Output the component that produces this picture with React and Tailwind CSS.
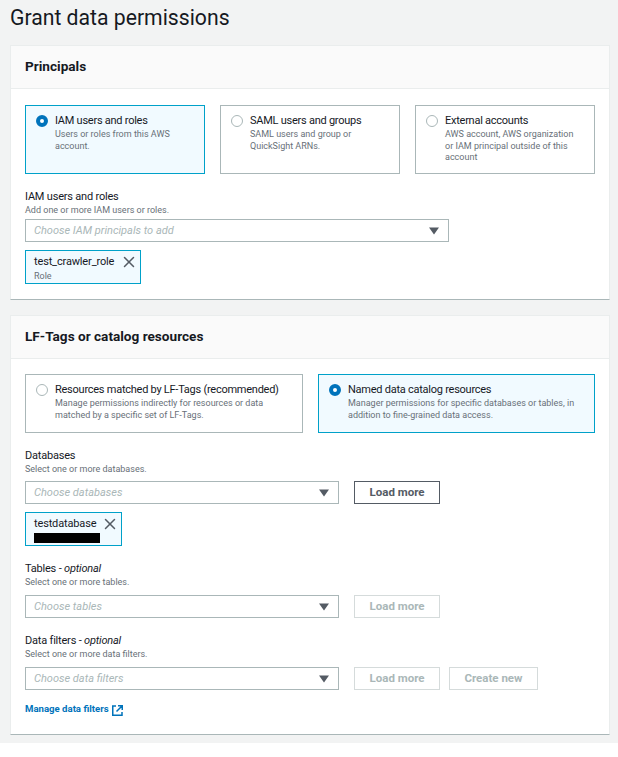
import React from 'react';
import { X } from 'lucide-react';

const font = { fontFamily: 'Roboto, sans-serif' };

const RadioCard = ({ title, desc, selected, className }) => (
  <div
    className={`flex gap-[7px] pl-[10px] pt-[7px] border ${
      selected ? 'border-[#00a1c9] bg-[#f1faff]' : 'border-[#aab7b8] bg-white'
    } ${className}`}
  >
    {selected ? (
      <div className="mt-[2px] w-3 h-3 shrink-0 rounded-full border-[4px] border-[#0073bb] bg-white" />
    ) : (
      <div className="mt-[2px] w-3 h-3 shrink-0 rounded-full border border-[#aab7b8] bg-white" />
    )}
    <div className="min-w-0">
      <div className="text-[11px] leading-[15px] text-[#16191f] tracking-[-0.25px]">{title}</div>
      <div className="text-[9px] leading-[11.5px] mt-[1px] text-[#687078]">{desc}</div>
    </div>
  </div>
);

const FieldLabel = ({ label, optional, desc }) => (
  <div>
    <div className="text-[11px] leading-[14px] text-[#16191f] tracking-[-0.2px]">
      {label}
      {optional && <span> - <i>optional</i></span>}
    </div>
    <div className="text-[9px] leading-[12px] text-[#687078]">{desc}</div>
  </div>
);

const Select = ({ placeholder, className }) => (
  <div className={`h-[23px] flex items-center justify-between pl-2 pr-[9px] border border-[#aab7b8] bg-white ${className}`}>
    <span className="mt-[1px] text-[11px] italic text-[#aab7b8]">{placeholder}</span>
    <svg width="10" height="8" viewBox="0 0 10 8">
      <path d="M0 0.5h10L5 7.5z" fill="#545b64" />
    </svg>
  </div>
);

const Btn = ({ children, disabled, className }) => (
  <div
    className={`h-[23px] flex items-center justify-center border bg-white text-[11.5px] font-bold ${
      disabled ? 'border-[#d5dbdb] text-[#aab7b8]' : 'border-[#545b64] text-[#545b64]'
    } ${className}`}
  >
    {children}
  </div>
);

const Token = ({ className, children }) => (
  <div className={`h-[34px] flex justify-between items-start pl-2 pr-[2px] pt-[3px] border border-[#00a1c9] bg-[#f1faff] ${className}`}>
    <div>{children}</div>
    <X className="w-[18px] h-[18px] -mt-[1px] shrink-0 text-[#545b64]" strokeWidth={2} />
  </div>
);

const Card = ({ title, children, className }) => (
  <section className={`ml-[10px] w-[600px] bg-white border-t border-t-[#eaeded] border-x border-x-[#eaeded] border-b border-b-[#aab7b8] ${className}`}>
    <div className="h-[43px] flex items-center pl-[14px] pb-[2px] bg-[#fafafa] border-b border-[#eaeded]">
      <h2 className="text-[13.6px] font-bold text-[#16191f]">{title}</h2>
    </div>
    {children}
  </section>
);

export default function App() {
  return (
    <div style={font} className="bg-white min-h-[757px]">
      <div className="bg-[#f2f3f3] h-[743px] overflow-hidden">
        <h1 className="pl-[10px] pt-[3px] h-[45px] text-[21.2px] leading-[30px] text-[#16191f]">
          Grant data permissions
        </h1>

        <Card title="Principals" className="h-[255px]">
          <div className="px-[14px] pt-[16px]">
            <div className="flex gap-[15px]">
              <RadioCard className="w-[180px] h-[69px] pr-4" selected title="IAM users and roles" desc="Users or roles from this AWS account." />
              <RadioCard className="w-[180px] h-[69px] pr-4" title="SAML users and groups" desc="SAML users and group or QuickSight ARNs." />
              <RadioCard className="w-[180px] h-[69px] pr-4" title="External accounts" desc="AWS account, AWS organization or IAM principal outside of this account" />
            </div>
            <div className="mt-[16px]">
              <FieldLabel label="IAM users and roles" desc="Add one or more IAM users or roles." />
            </div>
            <Select className="w-[424px] mt-[3px]" placeholder="Choose IAM principals to add" />
            <Token className="w-[116px] mt-[8px]">
              <div className="text-[11px] leading-[16px] text-[#16191f] tracking-[-0.15px]">test_crawler_role</div>
              <div className="text-[9px] leading-[12px] text-[#687078]">Role</div>
            </Token>
          </div>
        </Card>

        <Card title="LF-Tags or catalog resources" className="h-[420px] mt-[15px]">
          <div className="px-[14px] pt-[15px]">
            <div className="flex gap-[15px]">
              <RadioCard className="w-[278px] h-[59px] pr-2" title="Resources matched by LF-Tags (recommended)" desc="Manage permissions indirectly for resources or data matched by a specific set of LF-Tags." />
              <RadioCard className="w-[277px] h-[59px] pr-2" selected title="Named data catalog resources" desc="Manager permissions for specific databases or tables, in addition to fine-grained data access." />
            </div>
            <div className="mt-[16px]">
              <FieldLabel label="Databases" desc="Select one or more databases." />
            </div>
            <div className="flex mt-[6px]">
              <Select className="w-[314px]" placeholder="Choose databases" />
              <Btn className="w-[86px] ml-[15px]">Load more</Btn>
            </div>
            <Token className="w-[97px] mt-[8px]">
              <div className="text-[11px] leading-[16px] text-[#16191f] tracking-[-0.15px]">testdatabase</div>
              <div className="w-[66px] h-[10px] mt-[1px] bg-black" />
            </Token>
            <div className="mt-[16px]">
              <FieldLabel label="Tables" optional desc="Select one or more tables." />
            </div>
            <div className="flex mt-[7px]">
              <Select className="w-[314px]" placeholder="Choose tables" />
              <Btn disabled className="w-[86px] ml-[15px]">Load more</Btn>
            </div>
            <div className="mt-[16px]">
              <FieldLabel label="Data filters" optional desc="Select one or more data filters." />
            </div>
            <div className="flex mt-[7px]">
              <Select className="w-[314px]" placeholder="Choose data filters" />
              <Btn disabled className="w-[86px] ml-[15px]">Load more</Btn>
              <Btn disabled className="w-[89px] ml-[9px]">Create new</Btn>
            </div>
            <div className="flex items-center gap-[3px] mt-[12px] text-[9.6px] font-bold text-[#0073bb]">
              <span>Manage data filters</span>
              <svg width="11" height="11" viewBox="0 0 11 11" fill="none" stroke="#0073bb" strokeWidth="1.5" className="mt-[2px]">
                <path d="M4 1H.75v9.25H10V7M6 .75h4.25V5M10 1L4.5 6.5" />
              </svg>
            </div>
          </div>
        </Card>
      </div>
    </div>
  );
}
